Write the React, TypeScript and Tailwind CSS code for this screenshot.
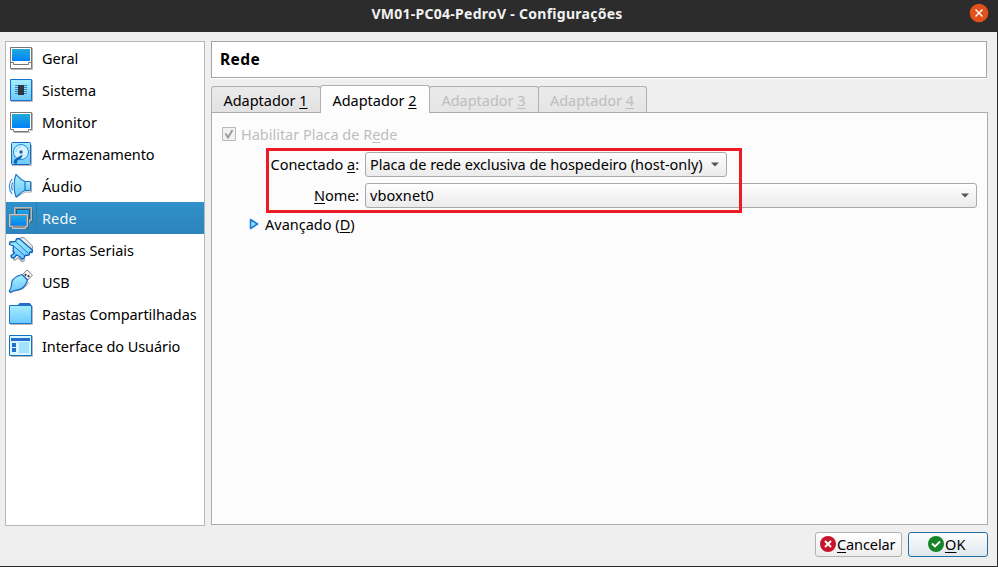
import type { ReactNode } from 'react';

type IconName = 'geral' | 'sistema' | 'monitor' | 'disco' | 'audio' | 'rede' | 'serial' | 'usb' | 'pasta' | 'interface';

function SidebarIcon({ name }: { name: IconName }) {
  return (
    <svg width="26" height="26" viewBox="0 0 26 26" fill="none" className="shrink-0">
      <defs>
        <linearGradient id="screen" x1="0" y1="0" x2="0" y2="1">
          <stop offset="0" stopColor="#22a9dd" />
          <stop offset="1" stopColor="#0082f8" />
        </linearGradient>
        <linearGradient id="sky" x1="0" y1="0" x2="0" y2="1">
          <stop offset="0" stopColor="#a5eeff" />
          <stop offset="1" stopColor="#6dc8fb" />
        </linearGradient>
      </defs>
      {name === 'geral' && (
        <>
          <path d="M3 24.500h21.500V3" stroke="#b8b8b8" />
          <path d="M2.500 2.500h21v21h-21z" fill="#fff" stroke="#777" />
          <path d="M2.500 17.500h3v2h15v-2h3" stroke="#777" />
          <path d="M4 4h18v12H4z" fill="url(#screen)" />
        </>
      )}
      {name === 'sistema' && (
        <>
          <path d="M3 24.500h21.500V3" stroke="#b8b8b8" />
          <path d="M2.500 2.500h21v21h-21z" fill="url(#sky)" stroke="#1673cc" />
          <path d="M7 8.500h12M7 10.500h12M7 12.500h12M7 14.500h12M7 16.500h12" stroke="#3188c5" />
          <path d="M10 8h6v10h-6z" fill="#30363f" />
        </>
      )}
      {name === 'monitor' && (
        <>
          <path d="M6 23.500h16M24.500 4v17.500H22" stroke="#b8b8b8" />
          <path d="M2.500 3.500h21v17h-3v2h-15v-2h-3z" fill="#fff" stroke="#777" />
          <path d="M4 5h18v14H4z" fill="url(#screen)" />
        </>
      )}
      {name === 'disco' && (
        <>
          <path d="M4 24.500h19.500V4" stroke="#b8b8b8" />
          <rect x="3.500" y="1.500" width="19" height="22" rx="1" fill="url(#sky)" stroke="#1867bd" />
          <circle cx="13" cy="11" r="7.500" fill="#d7f5ff" stroke="#1c87dc" />
          <path d="M8 11a5 5 0 0 1 5-5" stroke="#80caf0" />
          <circle cx="13" cy="11" r="1.700" fill="#1463ae" />
          <path d="M6 19l5-3.500 4-2-2 4-6 3.500z" fill="#1463ae" />
          <path d="M6 20.500l3 1" stroke="#1463ae" strokeWidth="3" />
        </>
      )}
      {name === 'audio' && (
        <>
          <path d="M8 24.500l9-5.500h6.500V9" stroke="#aaa" />
          <path d="M16.500 8.500h6v9h-6" fill="url(#sky)" stroke="#1976c8" />
          <path d="M8 1.500c-2.500 6-2.500 16 0 22.500 2-.5 4-5 9-6.500V8.500C12 7 10 2.500 8 1.500z" fill="url(#sky)" stroke="#1976c8" strokeWidth="1.200" strokeLinejoin="round" />
          <path d="M4.700 9.500c-1.300 2.500-1.300 5.500 0 8M4 6c-3.500 4.500-3.500 10.500 0 15" stroke="#3389dc" strokeWidth="1.200" />
        </>
      )}
      {name === 'rede' && (
        <>
          <path d="M6.500 2.500h17v13h-2v2h-13v-2h-2z" fill="#8b9398" stroke="#b5b9bb" />
          <path d="M8.500 4.500h13v9h-13z" fill="url(#screen)" stroke="#1b577c" />
          <path d="M24.500 4v13H22M20.500 12v12H17" stroke="#3b6a87" />
          <path d="M1.500 9.500h18v12h-2v2h-13v-2h-3z" fill="#8b9398" stroke="#c3c5c6" />
          <path d="M3 11h15v9.500H3z" fill="url(#screen)" />
        </>
      )}
      {name === 'serial' && (
        <>
          <path d="M11 2.500L13 .700h3L24.500 9l-.5 4-1.500 1z" fill="#eee" stroke="#888" />
          <path d="M5 22.500l2 .5 3-2 4 3.500 3-1.500" stroke="#aaa" strokeWidth="1.500" />
          <path d="M8.500 2L7.500 4.500l-5.500.5-.5 2.500 4 1.500-.5 5 1.500 2-3.500 2.500.5 2 2.500.5 2.500-3 3 1.500 2 2.500 2.500-.5 1-3 4-.5 1-3 2 .5.500-2.500L11 1.500z" fill="url(#sky)" stroke="#1262ba" strokeWidth="1.300" strokeLinejoin="round" />
          <path d="M7.500 4.500L20.500 16.500M5.500 9l11 9.500" stroke="#1b78ce" />
        </>
      )}
      {name === 'usb' && (
        <>
          <path d="M14.500 5.500L19 1l5.500 5-4.500 5z" fill="#f3f3f3" stroke="#888" />
          <path d="M16.800 5.200l1.400 1.400M19.800 6.500l1.400 1.400" stroke="#333" strokeWidth="1.800" />
          <path d="M4 23.500l2-1.500c6-.5 12.500-3 14.500-9" stroke="#aaa" />
          <path d="M14 5.500C9 7 4.500 9.500 3.800 13c-.6 3 .5 5-2.600 9l1.500 1.500C5 21 6.500 21.500 9 21.200c5.500-.7 9-5.200 10.500-10.200z" fill="url(#sky)" stroke="#1c6abf" strokeWidth="1.200" strokeLinejoin="round" />
        </>
      )}
      {name === 'pasta' && (
        <>
          <path d="M9 5.500L11.500 2H22l1.500 2.500V8H9z" fill="#2370cd" />
          <path d="M2 23.500h22.500V5" stroke="#b8b8b8" />
          <path d="M1.500 4.500h22v18h-22z" fill="url(#sky)" stroke="#1876cb" />
          <path d="M9 5h14V3H11z" fill="#2370cd" />
        </>
      )}
      {name === 'interface' && (
        <>
          <path d="M3 23.500h21.500V3" stroke="#b8b8b8" />
          <path d="M1.500 2.500h22v20h-22z" fill="#d9f6ff" stroke="#176fbf" />
          <path d="M3 5h19v3H3z" fill="#246fcb" />
          <path d="M4 10h4v4H4zM4 15h4v4H4z" fill="#246fcb" />
          <path d="M11 9h10v11H11z" fill="#a3e2ff" />
        </>
      )}
    </svg>
  );
}

const sections: { label: string; icon: IconName; text: string }[] = [
  { label: 'Geral', icon: 'geral', text: 'tracking-[0px]' },
  { label: 'Sistema', icon: 'sistema', text: 'tracking-[0.05px]' },
  { label: 'Monitor', icon: 'monitor', text: 'tracking-[0.05px]' },
  { label: 'Armazenamento', icon: 'disco', text: 'tracking-[-0.1px]' },
  { label: 'Áudio', icon: 'audio', text: 'tracking-[0.1px]' },
  { label: 'Rede', icon: 'rede', text: 'tracking-[0.1px]' },
  { label: 'Portas Seriais', icon: 'serial', text: 'tracking-[-0.03px]' },
  { label: 'USB', icon: 'usb', text: 'tracking-[-0.1px]' },
  { label: 'Pastas Compartilhadas', icon: 'pasta', text: 'tracking-[-0.08px]' },
  { label: 'Interface do Usuário', icon: 'interface', text: 'tracking-[-0.08px]' },
];

function Key({ children }: { children: ReactNode }) {
  return <span className="underline decoration-1 underline-offset-[2px] [text-decoration-skip-ink:none]">{children}</span>;
}

function Tab({ number, state }: { number: number; state: 'normal' | 'active' | 'disabled' }) {
  const look =
    state === 'active'
      ? 'z-10 h-[28px] w-[110px] -mb-px bg-gradient-to-b from-white to-[#fcfcfc] text-black'
      : state === 'normal'
        ? 'h-[26px] w-[110px] bg-gradient-to-b from-[#ebebeb] to-[#e2e2e2] text-black'
        : 'h-[26px] w-[110px] bg-gradient-to-b from-[#ebebeb] to-[#e5e5e5] text-[#bebebe] last:w-[109px]';
  return (
    <div className={`relative -mr-px flex items-center justify-center rounded-t-[3px] border border-b-0 border-[#b0b0b0] pr-px ${look}`}>
      <span className="tracking-[-0.02px]">
        Adaptador <Key>{number}</Key>
      </span>
    </div>
  );
}

function Combo({ children, className }: { children: ReactNode; className: string }) {
  return (
    <div className={`flex h-[25px] items-center justify-between rounded-[3px] border border-[#aaa] bg-gradient-to-b from-[#fefefe] to-[#ebebeb] pr-[7px] pl-[4px] ${className}`}>
      {children}
      <svg width="8" height="5" viewBox="0 0 8 5">
        <path d="M0 .5h8L4 4.500z" fill="#555" />
      </svg>
    </div>
  );
}

export default function App() {
  return (
    <div className="flex h-[567px] w-[998px] flex-col overflow-hidden bg-[#2c2c2c] font-['Noto_Sans',sans-serif] text-[14.5px] leading-[20px] text-black">
      <header className="relative flex h-[32px] items-center justify-center pr-[4px] pb-[5px] text-[14px] font-bold text-[#f2f2f2]">
        <span className="tracking-[0.27px]">VM01-PC04-PedroV - Configurações</span>
        <svg width="20" height="20" viewBox="0 0 20 20" className="absolute top-[3px] right-[9px]">
          <circle cx="10" cy="10" r="9.300" fill="#e2501c" />
          <path d="M6.500 6.500l7 7m0-7l-7 7" stroke="#fff" strokeWidth="1.400" />
        </svg>
      </header>
      <div className="mr-px mb-px flex flex-1 flex-col bg-[#efefef] pt-[9px] pl-[5px]">
        <div className="flex gap-[6px]">
          <nav className="h-[485px] w-[200px] border border-[#b7b7b7] bg-white">
            {sections.map(({ label, icon, text }) => (
              <div
                key={label}
                className={`flex h-[32px] items-center pl-[2px] ${label === 'Rede' ? 'bg-gradient-to-b from-[#3090c9] to-[#2d84bc] text-[#f2f8fc]' : ''}`}
              >
                <SidebarIcon name={icon} />
                <div className={`flex h-full flex-1 items-center pb-px whitespace-nowrap ${label === 'Rede' ? 'ml-[2px] border-l border-[#287fb5] pl-[5px]' : 'pl-[8px]'}`}>
                  <span className={text}>{label}</span>
                </div>
              </div>
            ))}
          </nav>
          <main className="flex w-[777px] flex-col">
            <h1 className="flex h-[37px] w-[776px] items-center border border-[#a5a5a5] bg-white pb-px pl-[8px] text-[15.5px] font-bold shadow-[0_1px_0_#fff]">
              <span className="tracking-[0.4px]">Rede</span>
            </h1>
            <div className="mt-[7px] flex h-[27px] items-end">
              <Tab number={1} state="normal" />
              <Tab number={2} state="active" />
              <Tab number={3} state="disabled" />
              <Tab number={4} state="disabled" />
            </div>
            <section className="h-[413px] border border-[#ababab] bg-[#fcfcfc] pl-[10px]">
              <label className="mt-[11px] flex h-[20px] items-center gap-[5px] text-[#bebebe]">
                <svg width="14" height="14" viewBox="0 0 14 14">
                  <path d="M.5.5h13v13H.5z" fill="#f1f1f1" stroke="#bababa" />
                  <path d="M3.500 6.500l2.500 4L10.500 3" fill="none" stroke="#999" strokeWidth="1.800" />
                </svg>
                <span className="tracking-[-0.02px]">
                  Habilitar Placa de R<Key>e</Key>de
                </span>
              </label>
              <div className="relative mt-[8px] grid grid-cols-[137px_1fr] gap-x-[6px] gap-y-[6px]">
                <div className="flex items-center justify-end pb-[2px]">
                  <span className="tracking-[-0.04px]">
                    Conectado <Key>a</Key>:
                  </span>
                </div>
                <Combo className="w-[362px]">
                  <span className="-mt-[2px] tracking-[-0.025px] whitespace-nowrap">Placa de rede exclusiva de hospedeiro (host-only)</span>
                </Combo>
                <div className="flex items-center justify-end pb-[2px]">
                  <span className="tracking-[-0.1px]">
                    <Key>N</Key>ome:
                  </span>
                </div>
                <Combo className="w-[612px]">
                  <span className="-mt-[2px] tracking-[0.1px]">vboxnet0</span>
                </Combo>
                <div className="pointer-events-none absolute -top-[4px] left-[44px] h-[65px] w-[476px] border-3 border-[#ed1c24]" />
              </div>
              <div className="mt-[5px] flex h-[21px] items-center gap-[6px] pl-[27px]">
                <svg width="10" height="12" viewBox="0 0 10 12">
                  <path d="M1.500 1.500L8.500 6l-7 4.500z" fill="#8fe0ff" stroke="#1b7fd4" strokeWidth="1.600" strokeLinejoin="round" />
                </svg>
                <span className="tracking-[0px]">
                  Avançado (<Key>D</Key>)
                </span>
              </div>
            </section>
          </main>
        </div>
        <footer className="mt-[6px] flex justify-end gap-[6px] pr-[9px]">
          <button className="flex h-[25px] w-[87px] items-center rounded-[3px] border border-[#b1b1b1] bg-gradient-to-b from-white to-[#ededed] pl-[4px]">
            <svg width="16" height="16" viewBox="0 0 16 16" className="-mt-px shrink-0">
              <circle cx="8" cy="8" r="8" fill="#c6162d" />
              <path d="M5 5l6 6m0-6l-6 6" stroke="#fff" strokeWidth="2" />
            </svg>
            <span className="-mt-[2px] ml-px tracking-[-0.1px]">
              <Key>C</Key>ancelar
            </span>
          </button>
          <button className="flex h-[25px] w-[80px] items-center rounded-[3px] border border-[#226f9f] bg-gradient-to-b from-[#fcfdfe] to-[#dfe8ed] pl-[19px]">
            <svg width="16" height="16" viewBox="0 0 16 16" className="-mt-px shrink-0">
              <circle cx="8" cy="8" r="8" fill="#178527" />
              <path d="M4 7.500L7 10.500l5-5" fill="none" stroke="#fff" strokeWidth="1.800" />
            </svg>
            <span className="-mt-[2px] ml-px tracking-[0.1px]">
              <Key>O</Key>K
            </span>
          </button>
        </footer>
      </div>
    </div>
  );
}
